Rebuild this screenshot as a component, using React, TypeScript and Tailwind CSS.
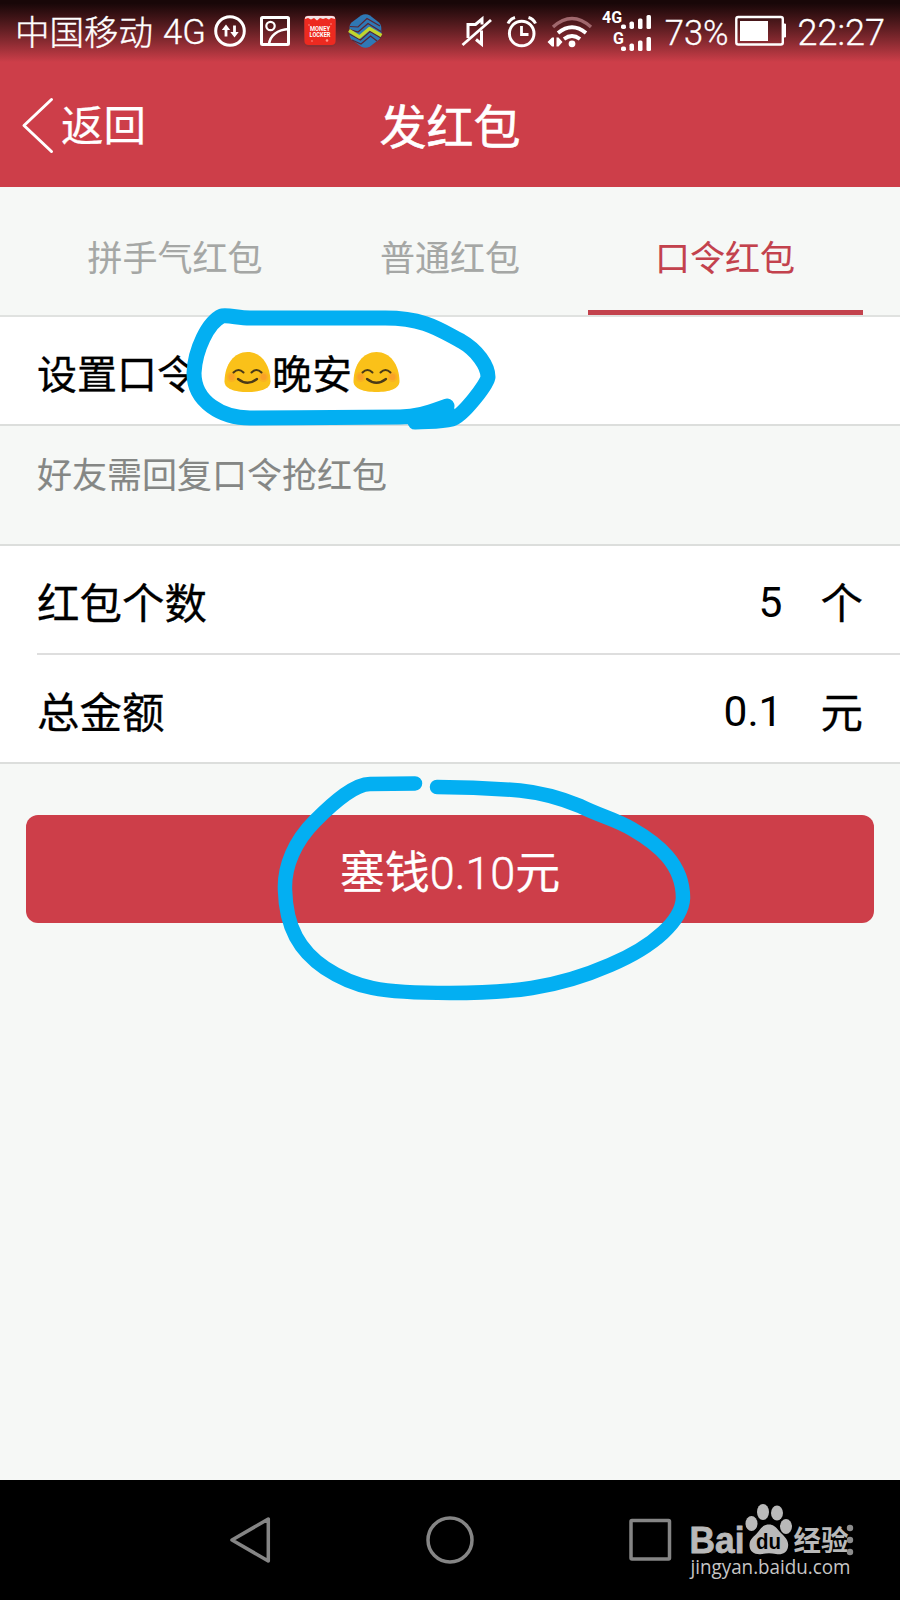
import React from "react";

const INK = "#03aff2";

function StatusIcons() {
  return (
    <svg className="ml-[7px] shrink-0" width="172" height="36" viewBox="213 13 172 36" fill="none">
      <g stroke="#fff" strokeWidth="3">
        <circle cx="230" cy="31" r="14.300" />
        <path d="M226 36.500V27M234.500 25.500V35" strokeWidth="2.800" />
        <path d="M221.800 30L226 24.500L230.200 30ZM230.300 32L234.500 37.500L238.700 32Z" fill="#fff" stroke="none" />
        <rect x="261.500" y="17.500" width="27" height="27" rx="1" />
        <circle cx="270.500" cy="26" r="4.200" strokeWidth="2.200" />
        <path d="M269 44C270 36 277 29.500 289 29" strokeWidth="2.500" />
      </g>
      <rect x="304" y="15.500" width="32" height="31.500" rx="5" fill="#8b3034" />
      <rect x="304.500" y="16" width="31" height="29" rx="4" fill="#ed2a20" />
      <path d="M305 18Q305 16 308 16H332Q335 16 335 18V19L331 18L329 19.500L326 18L323 19L320 18L317 20.500L314 18L311 19.500L308 18L305 19Z" fill="#f3e5e7" />
      <g fill="#ff9a90">
        <circle cx="309" cy="25" r="0.800" /><circle cx="331" cy="24" r="0.800" /><circle cx="327" cy="40.500" r="1.300" /><circle cx="312" cy="41" r="0.800" />
      </g>
      <text x="320" y="31" textAnchor="middle" textLength="20" lengthAdjust="spacingAndGlyphs" fontSize="7" fontWeight="700" fontFamily="Roboto, sans-serif" fill="#fff">MONEY</text>
      <text x="320" y="36.800" textAnchor="middle" textLength="21" lengthAdjust="spacingAndGlyphs" fontSize="7" fontWeight="700" fontFamily="Roboto, sans-serif" fill="#fff">LOCKER</text>
      <path d="M361 15.500C364 13.700 367 13.700 370 15.500L379 22.500C380.500 24 381.300 26 381.300 28V34C381.300 36 380.500 38 379 39.500L370 46.500C367 48.200 364 48.200 361 46.500L351.500 39.500C350 38 349.500 36 349.500 34V28C349.500 26 350 24 351.500 22.500Z" fill="#2f78b5" />
      <g stroke="#5a2433" strokeWidth="1.200">
        <path d="M350 26.500L358 27L367 18.500L380 26" />
        <path d="M349.500 29.500L358 32L368 23.500L381 31.500" />
        <path d="M349.500 34L360.500 40L370 31.500L381 38" />
        <path d="M352 40L361 44L370.500 36L377 41" />
      </g>
      <path d="M349 30.500L359.500 37L369.500 28.500L381.500 35.500" stroke="#c3d52b" strokeWidth="3.400" strokeLinejoin="round" />
    </svg>
  );
}

function SystemIcons() {
  return (
    <svg className="shrink-0" width="194" height="46" viewBox="458 7 194 46" fill="none" stroke="#fff">
      <path d="M467 37V23.500H474.500L481 18V23.500" strokeWidth="3" />
      <path d="M480.500 29.500V43L475 38.500" strokeWidth="3" />
      <path d="M461.500 44L490 19" strokeWidth="2.800" />
      <circle cx="520.700" cy="32.500" r="12.300" strokeWidth="3" />
      <path d="M520.500 25V33.500H527.500" strokeWidth="2.800" />
      <path d="M507 22.500Q509 18 514 16.500M527.500 16.500Q532.500 18 534.500 22.500" strokeWidth="3" />
      <path d="M552 26Q571 9 590 26" strokeWidth="3.400" stroke="#a0686d" />
      <path d="M557 32Q571 20.500 585 32" strokeWidth="3.800" />
      <path d="M563 38Q571 32 579 38" strokeWidth="3.800" />
      <circle cx="571" cy="42.800" r="3.400" fill="#fff" stroke="none" />
      <path d="M546.500 41L551 36.500H553V45.500H551ZM561.500 41L557.500 36.500H555.500V45.500H557.500Z" fill="#fff" stroke="none" />
      <g fill="#fff" stroke="none">
        <rect x="620" y="23.500" width="5" height="4.500" rx="1.800" />
        <rect x="628.500" y="20.500" width="4.500" height="7.500" rx="1.800" />
        <rect x="637" y="17.500" width="4.500" height="10.500" rx="1.500" />
        <rect x="645.500" y="14" width="4.500" height="14" rx="1.500" />
        <rect x="620" y="45.500" width="5" height="4.500" rx="1.800" />
        <rect x="628.500" y="42.500" width="4.500" height="7.500" rx="1.800" />
        <rect x="637" y="39.500" width="4.500" height="10.500" rx="1.500" />
        <rect x="645.500" y="36" width="4.500" height="14" rx="1.500" />
        <text x="601" y="21.500" fontSize="16" fontWeight="700" fontFamily="Roboto, sans-serif">4G</text>
        <text x="612" y="43" fontSize="16" fontWeight="700" fontFamily="Roboto, sans-serif">G</text>
      </g>
    </svg>
  );
}

function Battery() {
  return (
    <svg className="ml-[6px] shrink-0" width="52" height="32" viewBox="734 15 52 32" fill="none">
      <rect x="735.300" y="17" width="46.500" height="27.500" rx="2" stroke="#fff" strokeWidth="2.400" />
      <rect x="739" y="21" width="28" height="20" fill="#fff" />
      <path d="M782 24H784.500V37H782Z" fill="#fff" stroke="#fff" />
    </svg>
  );
}

function Blush() {
  return (
    <svg className="mt-[2px] shrink-0" width="47" height="42" viewBox="0 0 47 42" fill="none">
      <path d="M23.500 1C37 1 46 13 46.500 30C46.700 38 36 41 23.500 41S0.300 38 0.500 30C1 13 10 1 23.500 1Z" fill="#fac119" />
      <circle cx="7.500" cy="26" r="5" fill="#fb9a2e" opacity="0.400" />
      <circle cx="39.500" cy="26" r="5" fill="#fb9a2e" opacity="0.400" />
      <circle cx="7.500" cy="26" r="3" fill="#fb8a34" opacity="0.400" />
      <circle cx="39.500" cy="26" r="3" fill="#fb8a34" opacity="0.400" />
      <path d="M9.500 21.500Q14.500 16.500 19.500 21.500M27.500 21.500Q32.500 16.500 37.500 21.500" stroke="#4a3a17" strokeWidth="2" strokeLinecap="round" />
      <path d="M14 28Q23.500 35.500 33 28" stroke="#4a3a17" strokeWidth="2.300" strokeLinecap="round" />
    </svg>
  );
}

function Watermark() {
  return (
    <svg className="absolute left-[686px] top-[22px]" width="172" height="80" viewBox="686 1502 172 80" fill="#b9b9b9">
      <text x="689.500" y="1553" fontSize="36" fontWeight="700" fontFamily="'Liberation Sans', sans-serif" textLength="55" lengthAdjust="spacingAndGlyphs" stroke="#b9b9b9" strokeWidth="0.800">Bai</text>
      <ellipse cx="751.500" cy="1523.500" rx="6" ry="7.500" />
      <ellipse cx="763" cy="1512" rx="6" ry="8" />
      <ellipse cx="777" cy="1513" rx="6" ry="7.500" />
      <ellipse cx="786" cy="1526.500" rx="6" ry="7.500" />
      <path d="M769 1524.500C775 1524.500 777 1529 781 1533C786 1538 789 1541 788 1547C787 1553 782 1555 776 1554C771 1553 767 1553 762 1554C755 1555 750 1552 749.500 1546C749 1539 754 1537 758 1532C761 1528 763 1524.500 769 1524.500Z" />
      <text x="756" y="1549" fontSize="22" fontWeight="700" fontFamily="'Liberation Sans', sans-serif" fill="#000" textLength="25" lengthAdjust="spacingAndGlyphs">du</text>
      <text x="793.500" y="1550.500" fontSize="28" fontWeight="700" fontFamily="'Noto Sans CJK SC', sans-serif" textLength="55" lengthAdjust="spacingAndGlyphs">经验</text>
      <g fill="#8c8c8c">
        <circle cx="850" cy="1528" r="3.200" /><circle cx="850" cy="1540" r="3.200" /><circle cx="850" cy="1552" r="3.200" />
      </g>
      <text x="690.500" y="1574" fontSize="19.500" fontFamily="'Open Sans', 'Noto Sans', sans-serif" fill="#c6c6c6" textLength="160" lengthAdjust="spacingAndGlyphs">jingyan.baidu.com</text>
    </svg>
  );
}

function AmountRow({ label, value, unit }: { label: string; value: string; unit: string }) {
  return (
    <div className="flex h-[107px] items-center pr-[37px] pt-[11px] text-[42.500px] leading-none">
      <span className="flex-1 [-webkit-text-stroke:0.3px_#000]">{label}</span>
      <span className="mr-[38px] pb-[3px]">{value}</span>
      <span className="[-webkit-text-stroke:0.3px_#000]">{unit}</span>
    </div>
  );
}

export default function App() {
  return (
    <div className="relative flex h-[1600px] w-[900px] flex-col overflow-hidden whitespace-nowrap bg-[#f6f8f6] font-[Roboto,'Noto_Sans_CJK_SC',sans-serif] text-black">
      <header className="flex h-[187px] shrink-0 flex-col bg-[#cd3e49] text-white">
        <div className="flex h-[62px] items-center bg-linear-to-b from-[#180708] from-5% to-[#cd3e49] pl-[15px] pr-[15px] text-[34.500px] font-light leading-none">
          <span className="pt-[4px] [-webkit-text-stroke:0.4px_#fff]">中国移动</span>
          <span className="ml-[10px] pt-[3px] [-webkit-text-stroke:0.3px_#fff]">4G</span>
          <StatusIcons />
          <span className="flex-1" />
          <SystemIcons />
          <span className="ml-[12px] pt-[4px] [-webkit-text-stroke:0.3px_#fff]">73%</span>
          <Battery />
          <span className="ml-[11px] pt-[4px] text-[36px] [-webkit-text-stroke:0.3px_#fff]">22:27</span>
        </div>
        <div className="grid flex-1 grid-cols-3 items-center pl-[20px] pr-[20px] leading-none">
          <div className="flex items-center">
            <svg width="36" height="58" viewBox="0 0 36 58" fill="none" stroke="#fff" strokeWidth="3" strokeLinecap="round" strokeLinejoin="round">
              <path d="M31.500 3.500L4 29.500L31.500 55.500" />
            </svg>
            <span className="ml-[5px] pt-[5px] text-[42.500px] [-webkit-text-stroke:0.2px_#fff]">返回</span>
          </div>
          <h1 className="pt-[5px] text-center text-[47px] font-normal [-webkit-text-stroke:0.6px_#fff]">发红包</h1>
        </div>
      </header>

      <nav className="grid h-[130px] shrink-0 grid-cols-3 border-b-2 border-[#e0e2e0] px-[37.500px] text-[35px] leading-none text-[#a5a7a5]">
        <span className="flex items-center justify-center pt-[16px] [-webkit-text-stroke:0.1px_#a5a7a5]">拼手气红包</span>
        <span className="flex items-center justify-center pt-[16px] [-webkit-text-stroke:0.1px_#a5a7a5]">普通红包</span>
        <span className="flex items-center justify-center border-b-[5px] border-[#c3424d] pt-[21px] text-[#c3424d] [-webkit-text-stroke:0.1px_#c3424d]">口令红包</span>
      </nav>

      <section className="flex h-[109px] shrink-0 items-center border-b-2 border-[#dcdedc] bg-white pl-[37px] text-[40px] leading-none">
        <span className="pt-[10px] [-webkit-text-stroke:0.3px_#000]">设置口令</span>
        <span className="ml-[27px] flex items-center">
          <Blush />
          <span className="mx-[1px] pt-[10px] [-webkit-text-stroke:0.3px_#000]">晚安</span>
          <Blush />
        </span>
      </section>

      <p className="flex h-[118px] shrink-0 items-center pb-[17px] pl-[37px] text-[35px] leading-none text-[#858785] [-webkit-text-stroke:0.1px_#858785]">好友需回复口令抢红包</p>

      <section className="shrink-0 border-y-2 border-[#dcdedc] bg-white pl-[37px]">
        <AmountRow label="红包个数" value="5" unit="个" />
        <div className="h-[2px] bg-[#dedede]" />
        <AmountRow label="总金额" value="0.1" unit="元" />
      </section>

      <main className="flex-1 px-[26px] pt-[51px]">
        <button className="flex h-[108px] w-full items-center justify-center rounded-[12px] bg-[#cd3e49] pt-[8px] text-[45px] leading-none text-white">
          <span className="[-webkit-text-stroke:0.2px_#fff]">塞钱</span>
          <span className="font-light [-webkit-text-stroke:0.5px_#fff]">0.10</span>
          <span className="[-webkit-text-stroke:0.2px_#fff]">元</span>
        </button>
      </main>

      <footer className="relative h-[120px] shrink-0 bg-black">
        <svg className="block" width="900" height="120" viewBox="0 1480 900 120" fill="none" stroke="#858585" strokeWidth="3.500" strokeLinejoin="round">
          <path d="M268.300 1519V1561L232 1540Z" />
          <circle cx="450" cy="1540" r="22" />
          <rect x="631" y="1520.500" width="38.500" height="38.500" rx="1" />
        </svg>
        <Watermark />
      </footer>

      <svg className="pointer-events-none absolute left-0 top-0" width="900" height="1100" viewBox="0 0 900 1100" fill="none" stroke={INK} strokeWidth="15" strokeLinecap="round" strokeLinejoin="round">
        <path d="M447 406C430 412 418 417 400 417C345 417 300 418 250 418C222 418 194 402 194 373C195 350 208 322 222 316C230 315 238 318 250 318H385C425 318 440 330 461 341C477 350 488 366 488 377C488 383 463 416 452 419C440 422 430 421 415 422L447 410" />
        <path d="M415 783.500L370 784C355 784 335 801 315 821C295 841 284 866 285 890C286 928 300 951 325 968C355 988 380 993 450 993C510 993 555 989 610 965C655 946 682 920 683 898C683 864 658 844 632 829C615 819 600 816 580 806C563 799 545 793 520 790.500C490 788 470 787 437 787" strokeWidth="14.500" />
      </svg>
    </div>
  );
}
